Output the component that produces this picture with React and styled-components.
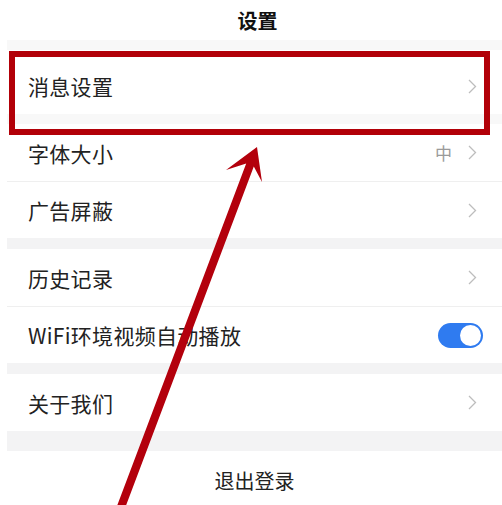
import styled, { createGlobalStyle } from "styled-components";

const GlobalStyle = createGlobalStyle`
	html, body {
		margin: 0;
		padding: 0;
		background: #ffffff;
	}
	body {
		font-family: "Noto Sans CJK SC", "Noto Sans", sans-serif;
		color: #222222;
	}
`;

const Page = styled.div`
	position: relative;
	width: 502px;
	height: 505px;
	overflow: hidden;
	background: #ffffff;
`;

const Screen = styled.div`
	display: flex;
	flex-direction: column;
	margin-left: 7px;
`;

const Header = styled.div`
	height: 40px;
	display: flex;
	align-items: center;
	justify-content: center;
	font-size: 20px;
	font-weight: 700;
	color: #111111;
	padding-left: 6px;
`;

const Gap = styled.div`
	height: ${(props) => props.$size}px;
	background: ${(props) => (props.$faint ? "#f8f8f8" : "#f3f3f4")};
`;

const Group = styled.div`
	display: flex;
	flex-direction: column;
	background: #ffffff;
`;

const Row = styled.div`
	height: ${(props) => props.$height || 57}px;
	padding-top: ${(props) => props.$offset || 0}px;
	box-sizing: border-box;
	display: flex;
	align-items: center;
	padding-left: 21px;
	padding-right: 25px;
	font-size: 21px;

	& + & {
		border-top: 1px solid #efefef;
	}
`;

const Label = styled.span`
	flex: 1;
	letter-spacing: 0.3px;
`;

const Value = styled.span`
	font-size: 17px;
	color: #9a9a9a;
	margin-right: 16px;
`;

const Chevron = styled.svg`
	width: 9px;
	height: 15px;
	flex-shrink: 0;
`;

const Toggle = styled.div`
	width: 45px;
	height: 25px;
	border-radius: 13px;
	background: #2f7bf0;
	margin-right: -6px;
	display: flex;
	align-items: center;
	justify-content: flex-end;
	padding: 2px;
	box-sizing: border-box;
`;

const Knob = styled.div`
	width: 21px;
	height: 21px;
	border-radius: 50%;
	background: #ffffff;
`;

const Logout = styled.div`
	height: 57px;
	display: flex;
	align-items: center;
	justify-content: center;
	font-size: 20px;
	padding-top: 2px;
	box-sizing: border-box;
`;

const Highlight = styled.div`
	position: absolute;
	left: 9px;
	top: 51px;
	width: 481px;
	height: 84px;
	border: 6px solid #b20008;
	box-sizing: border-box;
	pointer-events: none;
`;

const Overlay = styled.svg`
	position: absolute;
	left: 0;
	top: 0;
	pointer-events: none;
`;

function Arrow() {
	return (
		<Chevron viewBox="0 0 9 15">
			<path d="M1 1 L7.5 7.5 L1 14" fill="none" stroke="#bdbdbd" strokeWidth="1.3" />
		</Chevron>
	);
}

function Item({ label, value, toggle, height, offset }) {
	return (
		<Row $height={height} $offset={offset}>
			<Label>{label}</Label>
			{value && <Value>{value}</Value>}
			{toggle ? (
				<Toggle>
					<Knob />
				</Toggle>
			) : (
				<Arrow />
			)}
		</Row>
	);
}

export default function App() {
	return (
		<Page>
			<GlobalStyle />
			<Screen>
				<Header>设置</Header>
				<Gap $size={10} $faint />
				<Group>
					<Item label="消息设置" height={64} offset={8} />
				</Group>
				<Gap $size={10} $faint />
				<Group>
					<Item label="字体大小" value="中" />
					<Item label="广告屏蔽" />
				</Group>
				<Gap $size={11} />
				<Group>
					<Item label="历史记录" />
					<Item label="WiFi环境视频自动播放" toggle />
				</Group>
				<Gap $size={11} />
				<Group>
					<Item label="关于我们" />
				</Group>
				<Gap $size={20} />
				<Logout>退出登录</Logout>
			</Screen>
			<Highlight />
			<Overlay width="502" height="505" viewBox="0 0 502 505">
				<polygon
					points="257,147 262,182 253.8,166.4 123.8,511.4 116,508.6 246.2,163.6 226,170"
					fill="#b3000c"
				/>
			</Overlay>
		</Page>
	);
}
